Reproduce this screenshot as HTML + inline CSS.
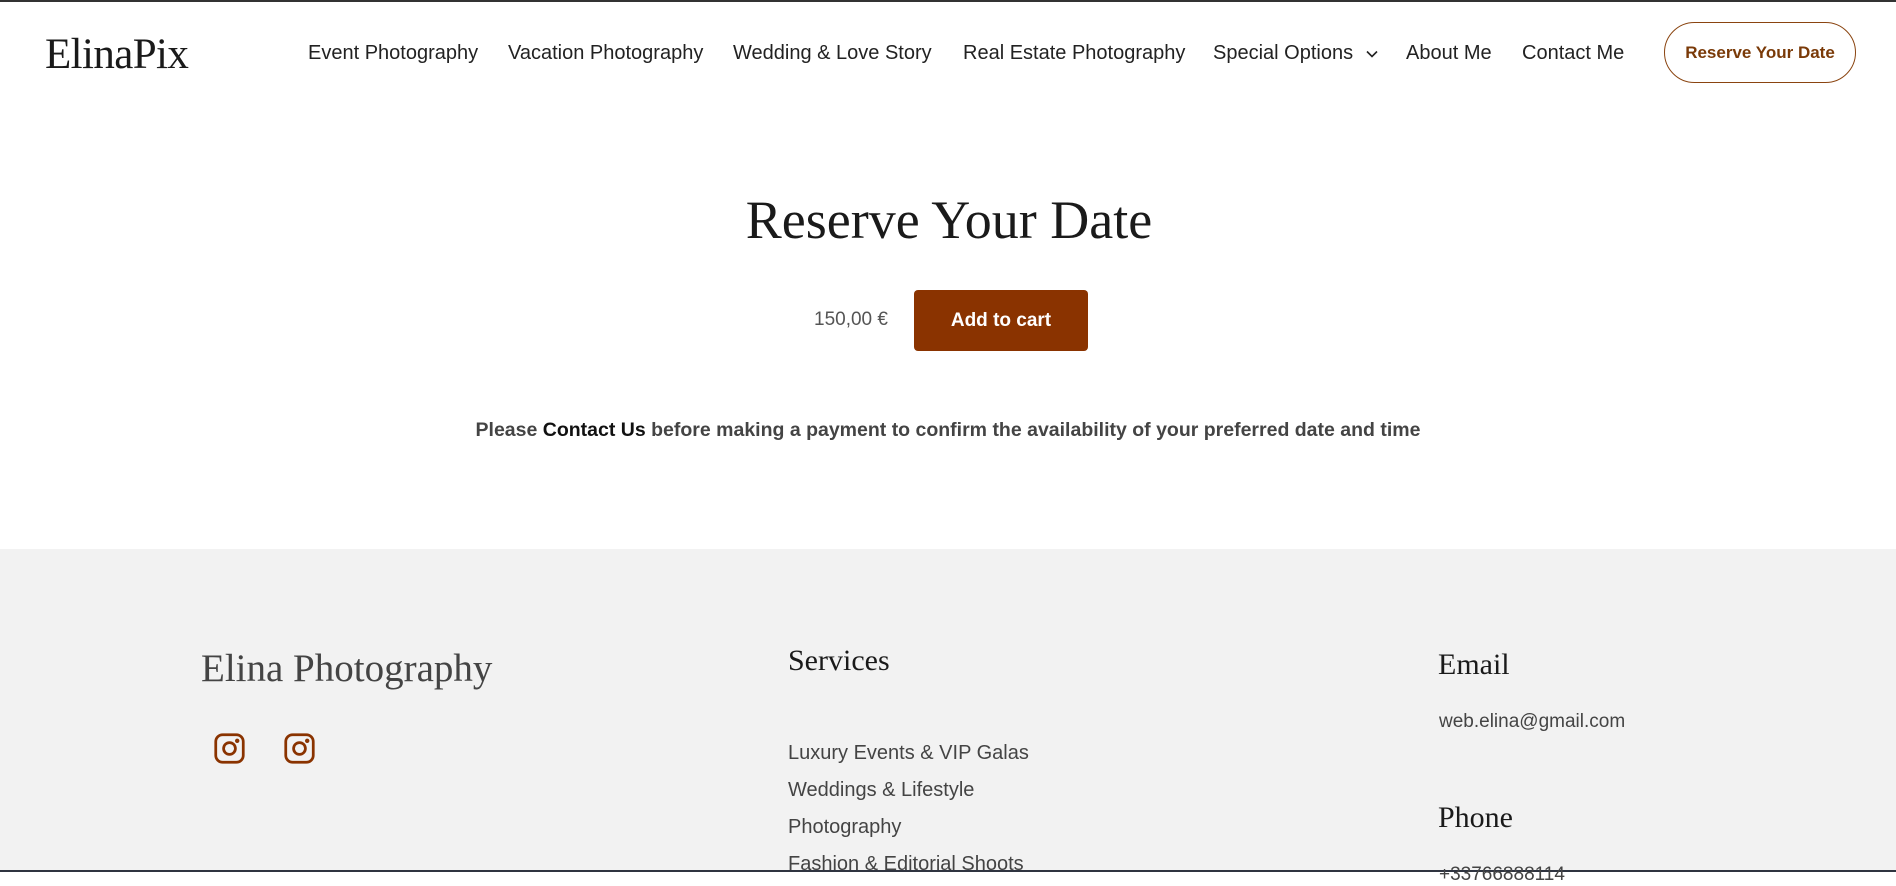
<!DOCTYPE html>
<html><head><meta charset="utf-8">
<style>
*{margin:0;padding:0;box-sizing:border-box}
html,body{width:1896px;height:872px;overflow:hidden;background:#fff;font-family:"Liberation Sans",sans-serif}
.a{position:absolute;white-space:nowrap}
.serif{font-family:"Liberation Serif",serif}
.nav{font-size:20px;color:#222;top:42px}
.foot{position:absolute;left:0;top:549px;width:1896px;height:323px;background:#f2f2f2;border-bottom:2px solid #2f3440}
.li{font-size:20px;color:#444;left:788px}
</style></head><body>
<div class="a" style="left:0;top:0;width:1896px;height:2px;background:#333"></div>
<div class="a serif" style="left:45px;top:30px;font-size:43px;color:#1a1a1a;letter-spacing:-0.6px">ElinaPix</div>
<div class="a nav" style="left:308px">Event Photography</div>
<div class="a nav" style="left:508px">Vacation Photography</div>
<div class="a nav" style="left:733px">Wedding &amp; Love Story</div>
<div class="a nav" style="left:963px">Real Estate Photography</div>
<div class="a nav" style="left:1213px">Special Options</div>
<svg class="a" style="left:1366px;top:50px" width="12" height="8" viewBox="0 0 12 8"><path d="M1 1.5l5 5 5-5" fill="none" stroke="#222" stroke-width="1.6"/></svg>
<div class="a nav" style="left:1406px">About Me</div>
<div class="a nav" style="left:1522px">Contact Me</div>
<div class="a" style="left:1664px;top:22px;width:192px;height:61px;border:1px solid #8a4410;border-radius:31px;color:#7a3a08;font-weight:bold;font-size:17px;display:flex;align-items:center;justify-content:center">Reserve Your Date</div>

<div class="a serif" style="left:0;width:1896px;text-align:center;top:189px;font-size:54px;color:#1a1a1a;padding-left:2px">Reserve Your Date</div>
<div class="a" style="left:814px;top:309px;font-size:19px;color:#555">150,00 €</div>
<div class="a" style="left:914px;top:290px;width:174px;height:61px;background:#8a3300;border-radius:4px;color:#fff;font-weight:bold;font-size:19px;display:flex;align-items:center;justify-content:center">Add to cart</div>
<div class="a" style="left:0;width:1896px;text-align:center;top:419px;font-size:19.5px;font-weight:bold;color:#444">Please <span style="color:#111">Contact Us</span> before making a payment to confirm the availability of your preferred date and time</div>

<div class="foot"></div>
<div class="a serif" style="left:201px;top:646px;font-size:39px;color:#444">Elina Photography</div>
<svg class="a" style="left:213px;top:732px" width="33" height="33" viewBox="0 0 24 24" fill="none" stroke="#8a3300" stroke-width="2"><rect x="2" y="2" width="20" height="20" rx="5"/><circle cx="12" cy="12" r="4.3"/><circle cx="17.6" cy="6.4" r="0.6" fill="#8a3300"/></svg>
<svg class="a" style="left:283px;top:732px" width="33" height="33" viewBox="0 0 24 24" fill="none" stroke="#8a3300" stroke-width="2"><rect x="2" y="2" width="20" height="20" rx="5"/><circle cx="12" cy="12" r="4.3"/><circle cx="17.6" cy="6.4" r="0.6" fill="#8a3300"/></svg>
<div class="a serif" style="left:788px;top:644px;font-size:30px;color:#1a1a1a">Services</div>
<div class="a li" style="top:742px">Luxury Events &amp; VIP Galas</div>
<div class="a li" style="top:779px">Weddings &amp; Lifestyle</div>
<div class="a li" style="top:816px">Photography</div>
<div class="a li" style="top:853px">Fashion &amp; Editorial Shoots</div>
<div class="a serif" style="left:1438px;top:648px;font-size:30px;color:#1a1a1a">Email</div>
<div class="a" style="left:1439px;top:711px;font-size:19px;color:#444">web.elina@gmail.com</div>
<div class="a serif" style="left:1438px;top:801px;font-size:30px;color:#1a1a1a">Phone</div>
<div class="a" style="left:1439px;top:864px;font-size:19px;color:#444">+33766888114</div>
</body></html>
